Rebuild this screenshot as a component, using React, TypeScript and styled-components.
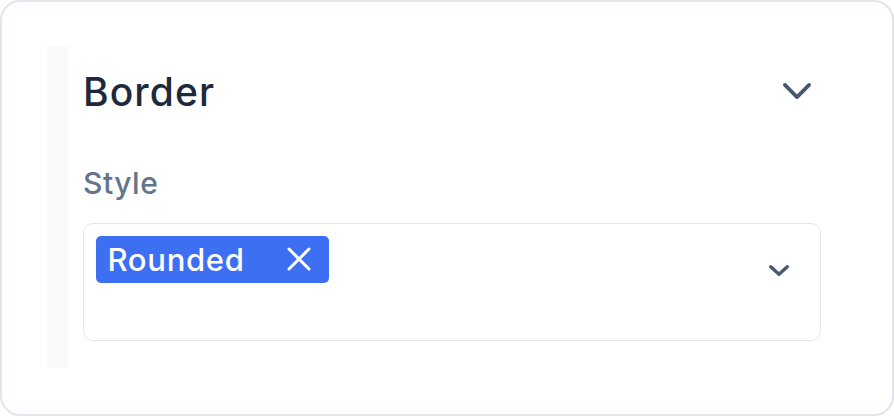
import React from "react";
import styled, { createGlobalStyle } from "styled-components";

const Global = createGlobalStyle`
  html, body { margin: 0; padding: 0; background: #ffffff; }
  body { font-family: Inter, "Noto Sans", sans-serif; -webkit-font-smoothing: antialiased; }
  * { box-sizing: border-box; }
`;

const Card = styled.div`
  width: 894px;
  height: 416px;
  border: 2px solid #e2e5ea;
  border-radius: 20px;
  background: #ffffff;
  padding: 44px 71px 46px 45px;
  display: flex;
`;

const Rail = styled.div`
  width: 21px;
  background: #fafafa;
  flex: none;
`;

const Section = styled.div`
  flex: 1;
  padding-left: 15px;
  display: flex;
  flex-direction: column;
`;

const Header = styled.div`
  display: flex;
  align-items: center;
  justify-content: space-between;
  height: 90px;
`;

const Title = styled.h2`
  margin: 0;
  font-size: 39px;
  font-weight: 500;
  color: #1e293b;
  letter-spacing: 1.1px;
`;

const IconButton = styled.button`
  border: 0;
  background: none;
  padding: 0;
  margin-right: 9px;
  display: flex;
  color: #4a5870;
`;

const Label = styled.div`
  margin-top: 29px;
  font-size: 30px;
  font-weight: 500;
  color: #64748b;
  line-height: 36px;
  letter-spacing: 0.5px;
`;

const SelectBox = styled.div`
  margin-top: 22px;
  height: 118px;
  border: 1.5px solid #e2e5ea;
  border-radius: 10px;
  padding: 11.5px 30px 12px 11.5px;
  display: flex;
  align-items: flex-start;
  justify-content: space-between;
`;

const Chip = styled.span`
  display: inline-flex;
  align-items: center;
  height: 47px;
  padding: 0 18px 0 12px;
  gap: 42px;
  background: #3d6ff2;
  color: #ffffff;
  border-radius: 5px;
  font-size: 31px;
  font-weight: 500;
  letter-spacing: 0.7px;
`;

const Caret = styled.span`
  display: flex;
  margin-top: 28px;
  color: #4a5870;
`;

const Chevron = ({ w, h, sw }: { w: number; h: number; sw: number }) => (
  <svg width={w} height={h} viewBox={`0 0 ${w} ${h}`} fill="none">
    <polyline
      points={`${sw / 2 + 1},${sw / 2 + 1} ${w / 2},${h - sw / 2 - 1} ${w - sw / 2 - 1},${sw / 2 + 1}`}
      stroke="currentColor"
      strokeWidth={sw}
      strokeLinecap="round"
      strokeLinejoin="round"
    />
  </svg>
);

const Cross = () => (
  <svg width="24" height="24" viewBox="0 0 24 24" fill="none">
    <path d="M2 2 L22 22 M22 2 L2 22" stroke="currentColor" strokeWidth="3" strokeLinecap="round" />
  </svg>
);

export default function App() {
  return (
    <>
      <Global />
      <Card>
        <Rail />
        <Section>
          <Header>
            <Title>Border</Title>
            <IconButton aria-label="Collapse">
              <Chevron w={30} h={18} sw={3.8} />
            </IconButton>
          </Header>
          <Label>Style</Label>
          <SelectBox>
            <Chip>
              Rounded
              <Cross />
            </Chip>
            <Caret>
              <Chevron w={22} h={13} sw={3.4} />
            </Caret>
          </SelectBox>
        </Section>
      </Card>
    </>
  );
}
